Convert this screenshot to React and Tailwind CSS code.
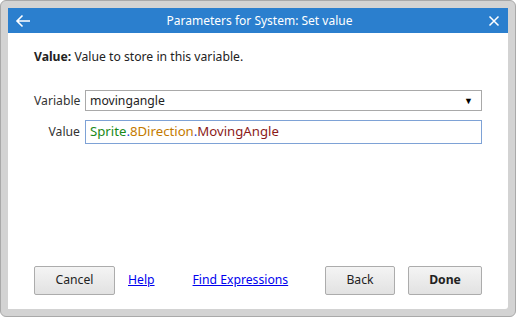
import React from "react";

const font = { fontFamily: '"Noto Sans", "Open Sans", sans-serif' };

const Button = ({ children, bold, className = "" }) => (
  <button
    className={`h-[29px] border border-[#acacac] rounded-[2px] bg-gradient-to-b from-[#f4f4f4] to-[#e2e2e2] text-[12.2px] text-[#222] ${bold ? "font-bold" : ""} ${className}`}
  >
    {children}
  </button>
);

export default function App() {
  return (
    <div className="w-[516px] h-[317px] bg-[#d3d3d3] border border-[#a9a9a9] rounded-[6px] p-[7px] pr-[7px]" style={font}>
      <div className="h-[301px] bg-white rounded-br-[3px] flex flex-col">
        {/* Title bar */}
        <div className="h-[25px] bg-[#2b7fce] flex items-center px-[7px] text-white">
          <svg width="16" height="14" viewBox="0 0 16 14" className="shrink-0">
            <path d="M15 7H2M7.5 1.5L2 7l5.5 5.5" fill="none" stroke="white" strokeWidth="1.6" />
          </svg>
          <div className="flex-1 text-center text-[12px] leading-none">Parameters for System: Set value</div>
          <svg width="12" height="12" viewBox="0 0 12 12" className="shrink-0 mr-[1px]">
            <path d="M1.5 1.5l9 9M10.5 1.5l-9 9" fill="none" stroke="white" strokeWidth="1.5" />
          </svg>
        </div>

        <div className="flex-1 flex flex-col px-[26px] pt-[15px] pb-[14px]">
          <p className="text-[12.2px] text-[#222]">
            <span className="font-bold">Value:</span> Value to store in this variable.
          </p>

          <div className="mt-[24px] flex items-center">
            <label className="w-[51px] text-right text-[12.2px] text-[#333] pr-[5px]">Variable</label>
            <div className="flex-1 h-[21px] border border-[#a9a9a9] flex items-center justify-between pl-[4px] pr-[8px] text-[12.2px] text-[#222]">
              <span>movingangle</span>
              <span className="text-[9px] text-black">▼</span>
            </div>
          </div>

          <div className="mt-[9px] flex items-center">
            <label className="w-[51px] text-right text-[12.2px] text-[#333] pr-[5px]">Value</label>
            <div className="flex-1 h-[24px] border border-[#7ea2d6] flex items-center pl-[4px] text-[13.2px]">
              <span className="text-[#1a8a1a]">Sprite</span>
              <span className="text-[#1e48d6]">.</span>
              <span className="text-[#c47a00]">8Direction</span>
              <span className="text-[#1e48d6]">.</span>
              <span className="text-[#8b1a1a]">MovingAngle</span>
            </div>
          </div>

          <div className="mt-auto flex items-center">
            <Button className="w-[81px]">Cancel</Button>
            <a href="#" className="ml-[13px] text-[12.2px] text-[#0000ee] underline">Help</a>
            <a href="#" className="ml-[38px] text-[12.2px] text-[#0000ee] underline">Find Expressions</a>
            <div className="flex-1" />
            <Button className="w-[70px]">Back</Button>
            <Button bold className="w-[74px] ml-[13px]">Done</Button>
          </div>
        </div>
      </div>
    </div>
  );
}
